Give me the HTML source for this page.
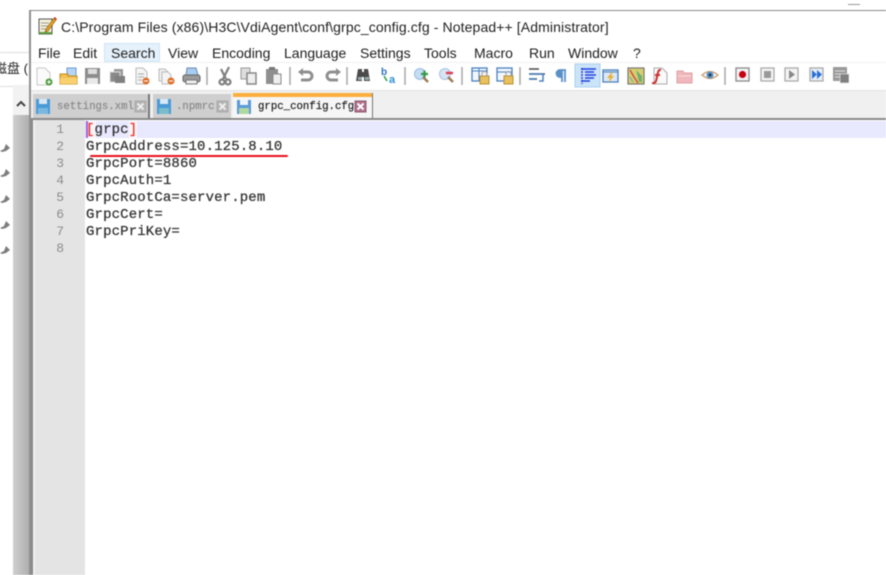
<!DOCTYPE html>
<html><head><meta charset="utf-8"><style>
html,body{margin:0;padding:0;background:#fff}
body{position:relative;width:886px;height:575px;overflow:hidden;font-family:"Liberation Sans","Noto Sans CJK SC",sans-serif;color:#222;filter:blur(.4px)}
div,span{position:absolute;white-space:pre}
.m{top:45px;font-size:14px;line-height:17px;color:#1e1e1e}
.c{left:86px;font:14px/17px "Liberation Mono",monospace;color:#333;letter-spacing:.14px;-webkit-text-stroke:.25px #333}
.n{left:35px;width:29px;text-align:right;font:13px/17px "Liberation Mono",monospace;color:#8c8c8c}
.t{top:99px;font:10.7px/16px "Liberation Mono",monospace;color:#8a8a8a;-webkit-text-stroke:.2px #8a8a8a}
</style></head><body>
<div style="left:0;top:52px;width:30px;height:33px;border-top:1px solid #ddd;border-bottom:1px solid #ddd"></div>
<div style="left:-6px;top:60px;font-size:13px;line-height:18px;color:#222">磁盘 (</div>
<div style="left:13px;top:95px;width:17px;height:480px;background:linear-gradient(90deg,#cfcfcf,#adadad)"></div>
<div style="left:13px;top:85px;width:16px;height:30px;background:#f2f2f2"></div>
<svg style="position:absolute;left:0;top:0" width="886" height="575">
<path d="M17 106l4-4 4 4" fill="none" stroke="#444" stroke-width="2"/>
<g fill="#7d7d7d"><path d="M0 151l4-2 2-5 4 4-4 3-4 1z"/><path d="M0 176l4-2 2-5 4 4-4 3-4 1z"/><path d="M0 202l4-2 2-5 4 4-4 3-4 1z"/><path d="M0 228l4-2 2-5 4 4-4 3-4 1z"/><path d="M0 253l4-2 2-5 4 4-4 3-4 1z"/></g>
</svg>
<div style="left:29px;top:10px;width:857px;height:565px;background:#fff;border-top:1px solid #8a8a8a;border-left:2px solid #8f8f8f;box-sizing:border-box"></div>
<div style="left:31px;top:90px;width:855px;height:28px;background:#f0f0f0;border-top:1px solid #e2e2e2;box-sizing:border-box"></div>
<div style="left:31px;top:62px;width:855px;height:1px;background:#f2f2f2"></div>
<div style="left:31px;top:118px;width:855px;height:2px;background:#8a8a8a"></div>
<div style="left:31px;top:120px;width:2px;height:455px;background:#8a8a8a"></div>
<div style="left:33px;top:120px;width:2px;height:455px;background:#f0f0f0"></div>
<div style="left:35px;top:120px;width:50px;height:455px;background:#e4e4e4"></div>
<div style="left:85px;top:120px;width:801px;height:455px;background:#fff"></div>
<div style="left:85px;top:121px;width:801px;height:17px;background:#e8e8ff"></div>
<div style="left:88px;top:121px;width:8px;height:17px;background:#f8f4f8"></div>
<div style="left:129px;top:121px;width:8px;height:17px;background:#f8f4f8"></div>
<div style="left:86px;top:121px;width:1.5px;height:17px;background:#a060e0"></div>
<div style="left:848px;top:4px;width:12px;height:1px;background:#999"></div>

<svg style="position:absolute;left:38px;top:16px" width="20" height="20" viewBox="0 0 20 20"><rect x="1" y="3" width="13" height="15" fill="#f4f1d8" stroke="#555"/><path d="M3 7h8M3 10h8M3 13h6" stroke="#999"/><path d="M8 13l8-11 2 2-8 11-3 1z" fill="#e8a020" stroke="#7a5010" stroke-width=".6"/><path d="M16 2l2 2 1-1-2-2z" fill="#d03030"/><rect x="1" y="16" width="13" height="2" fill="#60a040"/></svg>
<div style="left:61px;top:18px;font-size:14px;line-height:18px;color:#222;letter-spacing:.11px">C:\Program Files (x86)\H3C\VdiAgent\conf\grpc_config.cfg - Notepad++ [Administrator]</div>

<div style="left:104px;top:43px;width:56px;height:19px;background:#e5f1fb;border:1px solid #cde4f7;box-sizing:border-box"></div>
<span class="m" style="left:38px">File</span><span class="m" style="left:73px">Edit</span><span class="m" style="left:111px">Search</span><span class="m" style="left:168px">View</span><span class="m" style="left:212px">Encoding</span><span class="m" style="left:284px">Language</span><span class="m" style="left:360px">Settings</span><span class="m" style="left:424px">Tools</span><span class="m" style="left:474px">Macro</span><span class="m" style="left:529px">Run</span><span class="m" style="left:568px">Window</span><span class="m" style="left:633px">?</span>

<svg style="position:absolute;left:0;top:60px" width="886" height="32" viewBox="0 60 886 32">
<rect x="575" y="64" width="25" height="23" fill="#cce4f8" stroke="#a8d0f0"/>
<g fill="none" stroke="#a8a8a8" stroke-width="1.5"><path d="M207 67v18M290 67v18M347 67v18M405 67v18M462 67v18M520 67v18M725 67v18"/></g>
<path d="M37 68h8l5 5v12H37z" fill="#fafafa" stroke="#c8c8c8"/><circle cx="49" cy="82" r="3.5" fill="#4a9a3a"/><path d="M47 82h4M49 80v4" stroke="#fff"/>
<path d="M67 68h9v13H67z" fill="#b8d4f4" stroke="#6a9ad4"/><path d="M60 74h8v2h9v8H60z" fill="#f4c050" stroke="#c08a20"/><path d="M60 78h17v6H60z" fill="#f8d070"/>
<path d="M85 68h15v16H85z" fill="#8c8c8c"/><rect x="88" y="69" width="9" height="5" fill="#ddd"/><rect x="87" y="78" width="11" height="6" fill="#e8e8e8"/>
<path d="M114 69h9v8h-9z" fill="#999"/><path d="M110 72h10v10h-10z" fill="#8a8a8a" stroke="#ddd"/><path d="M115 76h10v7h-10z" fill="#808080"/>
<path d="M136 68h7l4 4v12h-11z" fill="#f4f4f4" stroke="#bbb"/><path d="M138 74h6M138 77h6M138 80h4" stroke="#aaa"/><circle cx="146" cy="81" r="3.5" fill="#e0702c"/><path d="M144 81h4" stroke="#fff"/>
<path d="M159 69h6l3 3v9h-9z" fill="#eee" stroke="#bbb"/><path d="M162 72h6l3 3v9h-9z" fill="#f4f4f4" stroke="#bbb"/><circle cx="171" cy="81" r="3.5" fill="#e0702c"/><path d="M169 81h4" stroke="#fff"/>
<path d="M187 68h9l2 7h-12z" fill="#a8cdf0" stroke="#6a8ab0"/><rect x="183" y="75" width="17" height="7" rx="2" fill="#9a9a9a" stroke="#666"/><rect x="186" y="80" width="11" height="4" fill="#eee" stroke="#777"/>
<g stroke="#808080" fill="none" stroke-width="2.2"><path d="M229 67l-6 12M221 69l5 10"/><circle cx="222" cy="82" r="2.5"/><circle cx="228" cy="82" r="2.5"/></g>
<path d="M241 68h9v11h-9z" fill="#ddd" stroke="#999"/><path d="M247 73h9v11h-9z" fill="#eee" stroke="#888" stroke-width="1.5"/>
<path d="M266 69h12v15h-12z" fill="#8f8f8f"/><rect x="269" y="67" width="6" height="3" fill="#777"/><path d="M273 74h8v10h-8z" fill="#eee" stroke="#888"/>
<path d="M301 72h7a4 4 0 0 1 0 8h-7" fill="none" stroke="#909090" stroke-width="3"/><path d="M303 68l-5 4 5 4z" fill="#909090"/>
<path d="M338 72h-7a4 4 0 0 0 0 8h7" fill="none" stroke="#909090" stroke-width="3"/><path d="M336 68l5 4-5 4z" fill="#909090"/>
<path d="M358 69h4v3h2v-3h4l2 12h-6v-4h-2v4h-6z" fill="#4a4a4a"/><path d="M358 77h4v3h-4zM365 77h4v3h-4z" fill="#9aa"/>
<text x="381" y="75" font-family="Liberation Sans" font-size="10" font-weight="bold" fill="#2a70c0">b</text><text x="389" y="83" font-family="Liberation Sans" font-size="11" font-weight="bold" fill="#2a90d0">a</text><path d="M384 76l3 5" stroke="#2a9a4a" stroke-width="1.5"/>
<circle cx="420" cy="74" r="5.5" fill="#c4dcf4" stroke="#9abce0"/><path d="M423 77l5 5" stroke="#9a7a50" stroke-width="2.5"/><path d="M421 74h7M424.500 70.500v7" stroke="#3a9a4a" stroke-width="2.2"/>
<circle cx="445" cy="74" r="5.500" fill="#d8e4f4" stroke="#a8c0e0"/><path d="M448 77l5 5" stroke="#9a7a50" stroke-width="2.5"/><path d="M446 73h7" stroke="#e04050" stroke-width="2.5"/>
<rect x="472" y="68" width="15" height="13" fill="#f2f6fc" stroke="#4a80c0" stroke-width="1.3"/><path d="M479 68v13M472 71h15" stroke="#4a80c0"/><rect x="480" y="76" width="9" height="8" fill="#e8c060" stroke="#b89030"/><path d="M482 76v-2a2.500 2.500 0 0 1 5 0v2" fill="none" stroke="#aaa" stroke-width="1.200"/>
<rect x="497" y="68" width="15" height="13" fill="#f2f6fc" stroke="#4a80c0" stroke-width="1.3"/><path d="M497 72h15" stroke="#4a80c0"/><rect x="504" y="76" width="9" height="8" fill="#e8c060" stroke="#b89030"/><path d="M506 76v-2a2.500 2.500 0 0 1 5 0v2" fill="none" stroke="#aaa" stroke-width="1.200"/>
<path d="M529 69h10M529 74h16M529 79h8" stroke="#4a4a4a" stroke-width="1.500"/><path d="M529 74h14v7h-4" fill="none" stroke="#4a80c0" stroke-width="1.500"/><path d="M529 79h7" stroke="#4a80c0" stroke-width="1.500"/>
<path d="M559 70h7M561 70h-1a3.500 3.500 0 0 0 0 7h2M562 70v12M565 70v12" fill="#5a90c8" stroke="#5a90c8" stroke-width="1.800"/>
<path d="M582 68v16" stroke="#3030d0" stroke-dasharray="2 1" stroke-width="1.500"/><path d="M581 69h15M585 72h9M585 75h11M585 78h9M581 81h9" stroke="#2040e0" stroke-width="1.500"/>
<rect x="603" y="70" width="15" height="12" fill="#dbe8f8" stroke="#4a80c0" stroke-width="1.300"/><path d="M603 72h15" stroke="#4a80c0"/><path d="M612 72l-5 6h3l-2 5 6-7h-3l2-4z" fill="#e8b030"/>
<rect x="628" y="68" width="16" height="16" fill="#d8d070" stroke="#777" stroke-width="1.200"/><path d="M630 70l4 7 4 6" stroke="#d05040" stroke-width="1.500"/><path d="M636 70l6 6v6h-3z" fill="#70b070"/><path d="M630 77l3 5" stroke="#60a0c0"/>
<path d="M654 68h8l5 5v11h-13z" fill="#fafafa" stroke="#aaa"/><path d="M661 70c-3-1-3 3-4 7s-1 7-5 6M655 75h5" fill="none" stroke="#d03030" stroke-width="2"/>
<path d="M677 71h6l1 2h8v10h-15z" fill="#eeb8bc" stroke="#e0a0a4"/><path d="M678 76h13" stroke="#f8dcdc"/>
<path d="M702 75q8-7 16 0q-8 7-16 0z" fill="#f4f4f4" stroke="#c8a070" stroke-width="1.300"/><circle cx="710" cy="75" r="3.500" fill="#5a90c8"/><circle cx="710" cy="75" r="1.400" fill="#234"/>
<rect x="736" y="68" width="13" height="13" fill="#f4f4f4" stroke="#8a8a8a" stroke-width="1.300"/><circle cx="742.500" cy="74.500" r="3.600" fill="#c80010"/>
<rect x="761" y="68" width="13" height="13" fill="#f4f4f4" stroke="#aaa" stroke-width="1.300"/><rect x="764" y="71" width="7" height="7" fill="#999"/>
<rect x="785" y="68" width="13" height="13" fill="#f4f4f4" stroke="#aaa" stroke-width="1.300"/><path d="M789 70l6 4.500-6 4.500z" fill="#888"/>
<rect x="810" y="68" width="13" height="13" fill="#e8eef8" stroke="#aaa" stroke-width="1.300"/><path d="M812 70l5 4.500-5 4.500zM817 70l5 4.500-5 4.500z" fill="#2a70d8"/>
<rect x="833" y="67" width="14" height="14" fill="#9a9a9a"/><path d="M835 71h10M835 74h5M835 77h5" stroke="#ddd"/><rect x="840" y="74" width="9" height="9" fill="#808080" stroke="#eee" stroke-width=".6"/>
</svg>

<div style="left:33px;top:94px;width:117px;height:24px;background:#cfcfcf;border-right:2px solid #777;box-sizing:border-box"></div>
<div style="left:153px;top:94px;width:78px;height:24px;background:#cfcfcf"></div>
<div style="left:233px;top:93px;width:140px;height:25px;background:#f6f6f6;border-right:1px solid #777;box-sizing:border-box"></div>
<div style="left:233px;top:93px;width:139px;height:4px;background:#fbae3c"></div>
<svg style="position:absolute;left:0;top:90px" width="886" height="30" viewBox="0 90 886 30">
<path d="M36 99h14v15H36z" fill="#4a9ad8"/><rect x="39" y="99" width="8" height="5" fill="#d8e8f4"/><rect x="38" y="108" width="10" height="6" fill="#7ab8e0"/>
<path d="M157 99h14v15h-14z" fill="#4a9ad8"/><rect x="160" y="99" width="8" height="5" fill="#d8e8f4"/><rect x="159" y="108" width="10" height="6" fill="#7abcc8"/>
<path d="M237 100h14v14h-14z" fill="#5a9ad8"/><rect x="240" y="100" width="8" height="5" fill="#eef4fa"/><rect x="239" y="108" width="10" height="6" fill="#b0d8a0"/>
<rect x="135" y="101" width="11" height="11" fill="#b4b4b4" stroke="#aaa"/><path d="M137.500 103.500l6 6M143.500 103.500l-6 6" stroke="#eee" stroke-width="2"/>
<rect x="217" y="101" width="11" height="11" fill="#b4b4b4" stroke="#aaa"/><path d="M219.500 103.500l6 6M225.500 103.500l-6 6" stroke="#eee" stroke-width="2"/>
<rect x="355" y="101" width="11" height="11" fill="#b0708c" stroke="#905a70"/><path d="M357.500 103.500l6 6M363.500 103.500l-6 6" stroke="#fff" stroke-width="2"/>
</svg>
<span class="t" style="left:57px">settings.xml</span>
<span class="t" style="left:176px">.npmrc</span>
<span class="t" style="left:258px;color:#222;-webkit-text-stroke:.2px #222">grpc_config.cfg</span>

<span class="n" style="top:121px">1</span><span class="n" style="top:138px">2</span><span class="n" style="top:155px">3</span><span class="n" style="top:172px">4</span><span class="n" style="top:189px">5</span><span class="n" style="top:206px">6</span><span class="n" style="top:223px">7</span><span class="n" style="top:240px">8</span>

<span class="c" style="top:122px"><span style="position:static;color:#f03020;-webkit-text-stroke:.25px #f03020">[</span>grpc<span style="position:static;color:#f03020;-webkit-text-stroke:.25px #f03020">]</span></span>
<span class="c" style="top:139px">GrpcAddress=10.125.8.10</span>
<span class="c" style="top:156px">GrpcPort=8860</span>
<span class="c" style="top:173px">GrpcAuth=1</span>
<span class="c" style="top:190px">GrpcRootCa=server.pem</span>
<span class="c" style="top:207px">GrpcCert=</span>
<span class="c" style="top:224px">GrpcPriKey=</span>
<div style="left:90px;top:155px;width:198px;height:2px;background:#e8101c;border-radius:1px"></div>
</body></html>
